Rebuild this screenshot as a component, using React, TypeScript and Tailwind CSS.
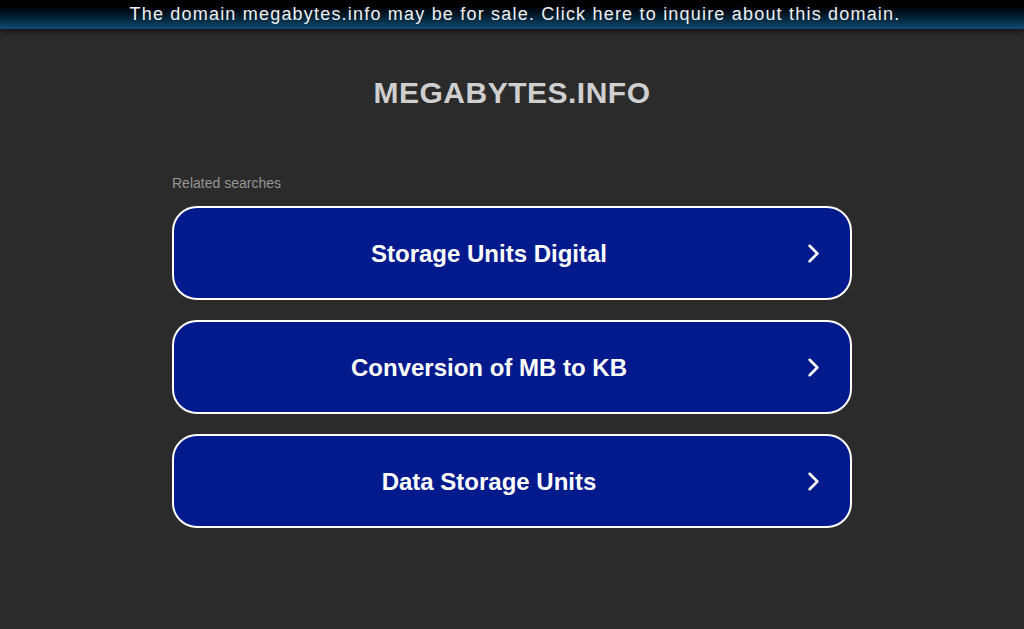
import { ChevronRight } from 'lucide-react';

const searches = ['Storage Units Digital', 'Conversion of MB to KB', 'Data Storage Units'];

export default function App() {
  return (
    <div className="flex min-h-[629px] flex-col bg-[#2b2b2b] font-['Liberation_Sans',Arial,sans-serif]">
      <div className="relative z-10 flex h-[29px] items-center justify-center bg-gradient-to-b from-[#000000] to-[#0e4d74] pl-[6px] shadow-[0_2px_6px_rgba(0,0,0,0.7)]">
        <a href="#" className="text-[18px] tracking-[1.2px] text-[#f0f0f0]">
          The domain megabytes.info may be for sale. Click here to inquire about this domain.
        </a>
      </div>

      <div className="flex flex-col items-center pt-[46px]">
        <h1 className="text-[30px] font-bold leading-[36px] tracking-[0.5px] text-[#cfcfcf]">MEGABYTES.INFO</h1>
      </div>

      <div className="mx-auto mt-[63px] flex w-[680px] flex-col">
        <p className="text-[14px] leading-[18px] text-[#959595]">Related searches</p>
        <div className="mt-[14px] flex flex-col gap-[20px]">
          {searches.map((s) => (
            <a
              key={s}
              href="#"
              className="flex h-[94px] items-center rounded-[25px] border-2 border-white bg-[#021a8c] pl-[6px] pr-[21px] text-white"
            >
              <span className="flex-1 pt-[2px] text-center text-[24px] font-bold">{s}</span>
              <ChevronRight className="h-[31px] w-[31px]" strokeWidth={2} />
            </a>
          ))}
        </div>
      </div>
    </div>
  );
}
